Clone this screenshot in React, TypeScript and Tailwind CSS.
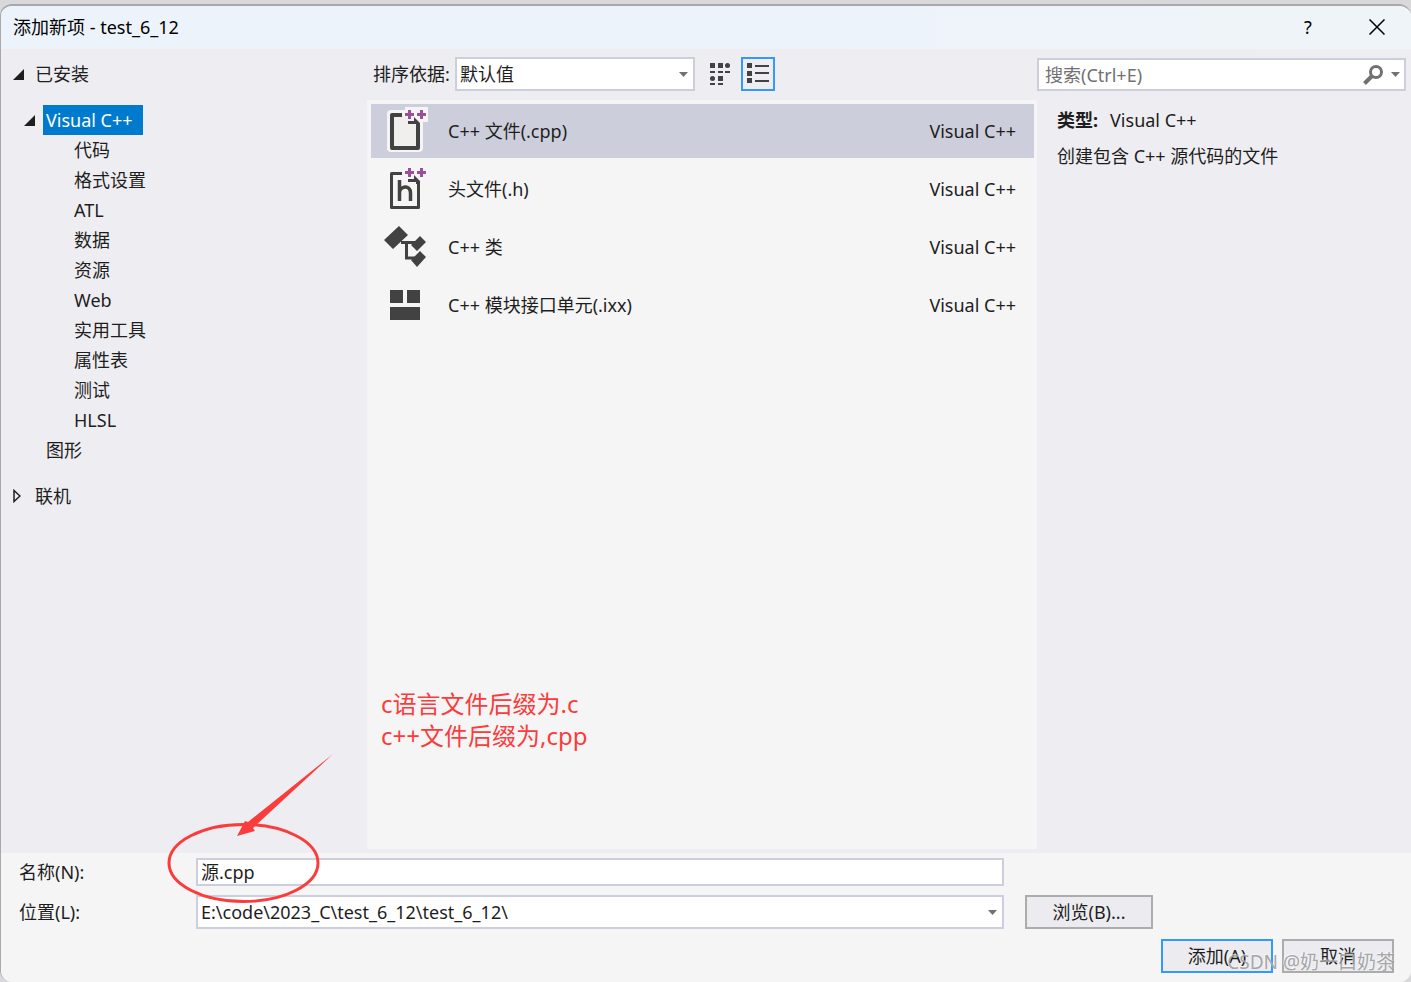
import React from "react";

const categories = ["代码", "格式设置", "ATL", "数据", "资源", "Web", "实用工具", "属性表", "测试", "HLSL"];

function FileIcon({ header = false }: { header?: boolean }) {
  return (
    <svg width="48" height="54" viewBox="0 0 48 54" aria-hidden="true">
      {!header && (
        <>
          <rect x="7" y="6" width="36" height="42" rx="4" fill="#f5f5f5" />
          <path d="M25 3h23v15H36l-5-3h-6z" fill="#f5f5f5" />
        </>
      )}
      <path
        d={header ? "M22 11.500H11.500v34h27V20" : "M22 11H12v33h26V20"}
        fill={header ? "none" : "#f0efee"}
        stroke="#424242"
        strokeWidth={header ? 3 : 4}
        strokeLinejoin="round"
      />
      <path d="M28 17h6v-4l6 6v3h-4v-2h-8z" fill="#424242" />
      <path d="M28 6h3v3h3v3h-3v3h-3v-3h-3V9h3zM40 6h3v3h3v3h-3v3h-3v-3h-3V9h3z" fill="#9b4f96" />
      {header && <path d="M19.500 39V18M19.500 31c0-7 11-9 11 0v8" fill="none" stroke="#424242" strokeWidth="3.500" />}
    </svg>
  );
}

function ClassIcon() {
  return (
    <svg width="48" height="54" viewBox="1 0 48 54" aria-hidden="true">
      <path d="M5 20 20 6l9 9-15 14zM32 25l9-9 6 6-9 9zM32 40l9-9 6 6-9 10z" fill="#424242" />
      <path d="M22 22.500h14M27.500 22v16H36" fill="none" stroke="#424242" strokeWidth="3" />
    </svg>
  );
}

function ModuleIcon() {
  return (
    <svg width="48" height="54" viewBox="0 0 48 54" aria-hidden="true">
      <path d="M10 12h13v13H10zM27 12h13v13H27zM10 29h30v13H10z" fill="#424242" />
    </svg>
  );
}

const templates = [
  { name: "C++ 文件(.cpp)", icon: <FileIcon />, selected: true },
  { name: "头文件(.h)", icon: <FileIcon header />, selected: false },
  { name: "C++ 类", icon: <ClassIcon />, selected: false },
  { name: "C++ 模块接口单元(.ixx)", icon: <ModuleIcon />, selected: false },
];

function Caret() {
  return (
    <svg width="9" height="5" viewBox="0 0 9 5" aria-hidden="true">
      <path d="M0 0h9L4.500 5z" fill="#717171" />
    </svg>
  );
}

function Expanded() {
  return (
    <svg width="11" height="11" viewBox="0 0 11 11" aria-hidden="true">
      <path d="M11 0v11H0z" fill="#1e1e1e" />
    </svg>
  );
}

export default function App() {
  return (
    <div className="flex min-h-screen flex-col bg-[#d9d8db] pt-1 font-['Noto_Sans','Noto_Sans_CJK_SC',sans-serif] text-lg/[30px] text-[#1e1e1e]">
      <div className="relative flex flex-1 flex-col overflow-hidden rounded-xl border-t-2 border-l border-[#a9a8ac] bg-[#f5f5f5]">
        <header className="flex h-[43px] items-center bg-gradient-to-r from-[#edf3fb] via-[#edf3fb] to-[#eef4f7] pb-[2px] pl-3 text-black">
          <h1 className="flex-1">添加新项 - test_6_12</h1>
          <button type="button" aria-label="帮助" className="flex h-full w-[70px] items-center justify-center">?</button>
          <button type="button" aria-label="关闭" className="flex h-full w-[68px] items-center justify-center">
            <svg width="16" height="16" viewBox="0 0 16 16" aria-hidden="true">
              <path d="M.5.5l15 15M15.500.5l-15 15" stroke="#000" strokeWidth="1.500" />
            </svg>
          </button>
        </header>

        <main className="flex flex-1 bg-[#eeeef2]">
          <nav className="w-[366px] shrink-0 pt-[10px] pl-3">
            <button type="button" className="flex items-center gap-[11px]">
              <Expanded />
              已安装
            </button>
            <div className="mt-4 flex items-center gap-2 pl-[11px]">
              <Expanded />
              <button type="button" className="w-[100px] bg-[#007acc] pl-[3px] text-left text-white">Visual C++</button>
            </div>
            <ul className="pl-[61px]">
              {categories.map((name) => (
                <li key={name}>
                  <button type="button" className="block">{name}</button>
                </li>
              ))}
            </ul>
            <button type="button" className="ml-[33px] block">图形</button>
            <button type="button" className="mt-4 flex items-center gap-[14px]">
              <svg width="8" height="14" viewBox="0 0 8 14" aria-hidden="true">
                <path d="M1 1.500v11L7 7z" fill="none" stroke="#1e1e1e" strokeWidth="1.500" />
              </svg>
              联机
            </button>
          </nav>

          <section className="flex min-w-0 flex-1 flex-col pb-1">
            <div className="flex h-[51px] items-center pb-[2px] pl-[6px]">
              <label htmlFor="sort" className="w-[82px] shrink-0 whitespace-nowrap">排序依据:</label>
              <div className="relative">
                <select id="sort" className="block h-[34px] w-60 appearance-none border-2 border-[#cccedb] bg-white pl-[3px] outline-none">
                  <option>默认值</option>
                </select>
                <span className="pointer-events-none absolute top-[15px] right-[7px]"><Caret /></span>
              </div>
              <button type="button" aria-label="中等图标" className="ml-2 flex size-[34px] items-center justify-center">
                <svg width="22" height="24" viewBox="0 0 22 24" aria-hidden="true">
                  <path d="M1 1h5v5H1zM9 1h5v5H9zM9 14h5v5H9zM1 9h5v2H1zM9 9h5v2H9zM16 9h5v2h-5zM1 21h5v2H1zM9 21h5v2H9z" fill="#424242" />
                  <circle cx="18.500" cy="3.500" r="2.500" fill="#424242" />
                  <circle cx="3.500" cy="16.500" r="2.500" fill="#424242" />
                </svg>
              </button>
              <button type="button" aria-label="小图标" className="ml-1 flex size-[34px] items-center justify-center border-2 border-[#3399ff]">
                <svg width="22" height="22" viewBox="0 0 22 22" aria-hidden="true">
                  <path d="M0 0h5v5H0zM0 8h5v5H0zM0 15h5v5H0zM8 2h14v2H8zM8 9h14v2H8zM8 17h14v2H8z" fill="#424242" />
                </svg>
              </button>
            </div>
            <ul className="flex flex-1 flex-col gap-1 bg-[#f5f5f5] pt-1 pr-[3px] pl-1">
              {templates.map((t) => (
                <li key={t.name}>
                  <button type="button" className={`flex h-[54px] w-full items-center pr-[18px] pl-[9px] text-left ${t.selected ? "bg-[#cccedb]" : ""}`}>
                    {t.icon}
                    <span className="flex-1 pl-5">{t.name}</span>
                    <span>Visual C++</span>
                  </button>
                </li>
              ))}
            </ul>
          </section>

          <aside className="w-[374px] shrink-0 pt-[9px] pr-[5px]">
            <div className="flex h-[33px] items-center border-2 border-[#cccedb] bg-white pr-1 pl-[6px]">
              <input aria-label="搜索" placeholder="搜索(Ctrl+E)" className="h-7 min-w-0 flex-1 bg-transparent outline-none placeholder:text-[#717171]" />
              <svg width="20" height="20" viewBox="0 0 20 20" fill="none" stroke="#717171" aria-hidden="true">
                <circle cx="13" cy="7" r="5.500" strokeWidth="3" />
                <path d="M9 11l-7.500 7.500" strokeWidth="4" />
              </svg>
              <button type="button" aria-label="搜索选项" className="ml-2"><Caret /></button>
            </div>
            <div className="pt-[14px] pl-5">
              <p><strong className="mr-3 font-bold">类型:</strong>Visual C++</p>
              <p className="mt-[6px]">创建包含 C++ 源代码的文件</p>
            </div>
          </aside>
        </main>

        <footer className="bg-[#f5f5f5] pt-1 pr-[17px] pb-[9px] pl-[18px]">
          <div className="flex items-center pr-[390px]">
            <label htmlFor="name" className="w-[177px] shrink-0">名称(N):</label>
            <input id="name" defaultValue="源.cpp" className="h-7 min-w-0 flex-1 border-2 border-[#cccedb] bg-white pl-[3px] outline-none" />
          </div>
          <div className="mt-2 flex items-center">
            <label htmlFor="location" className="w-[177px] shrink-0">位置(L):</label>
            <div className="relative min-w-0 flex-1">
              <select id="location" className="block h-[34px] w-full appearance-none border-2 border-[#cccedb] bg-white pl-[3px] outline-none">
                <option>{"E:\\code\\2023_C\\test_6_12\\test_6_12\\"}</option>
              </select>
              <span className="pointer-events-none absolute top-[15px] right-[7px]"><Caret /></span>
            </div>
            <button type="button" className="mr-[241px] ml-[21px] h-[34px] w-32 border-2 border-[#acacac] bg-[#ececf0]">浏览(B)...</button>
          </div>
          <div className="mt-[10px] flex justify-end gap-[9px]">
            <button type="button" className="h-[34px] w-28 border-2 border-[#3399ff] bg-[#ececf0]">添加(A)</button>
            <button type="button" className="h-[34px] w-28 border-2 border-[#acacac] bg-[#ececf0]">取消</button>
          </div>
        </footer>

        <p className="pointer-events-none absolute bottom-[230px] left-[380px] text-2xl/8 text-[#fa3c3c]">
          c语言文件后缀为.c
          <br />
          c++文件后缀为,cpp
        </p>
        <svg className="pointer-events-none absolute bottom-[71px] left-[165px]" width="172" height="160" viewBox="0 0 172 160" aria-hidden="true">
          <ellipse cx="77.500" cy="112" rx="74.500" ry="38.500" fill="none" stroke="#fa3c3c" strokeWidth="3" />
          <path d="M167 3 82 71l-3-1-8 15 18-5-2-3z" fill="#fa3c3c" />
        </svg>
        <span className="pointer-events-none absolute right-4 bottom-[6px] text-[19px]/7 text-[#9c9c9c]/90 [text-shadow:-1px_-1px_0_rgba(255,255,255,0.5)]">CSDN @奶一口奶茶</span>
      </div>
    </div>
  );
}
